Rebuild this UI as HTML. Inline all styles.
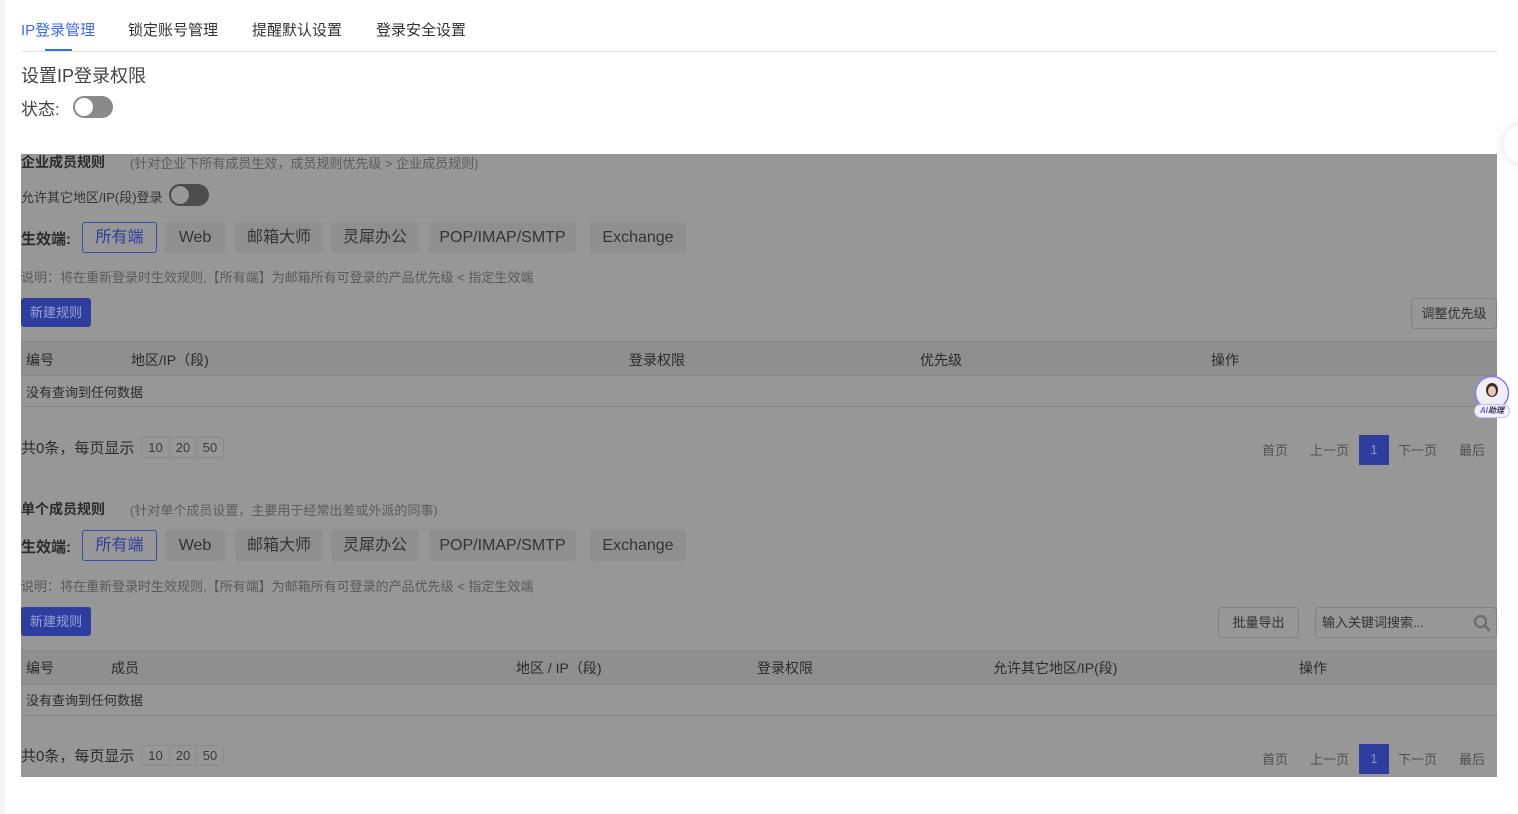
<!DOCTYPE html>
<html><head><meta charset="utf-8"><style>
*{margin:0;padding:0;box-sizing:border-box}
body{width:1518px;height:814px;background:#fff;font-family:"Liberation Sans","Noto Sans CJK SC",sans-serif;position:relative;overflow:hidden;color:#333}
.a{position:absolute;white-space:nowrap}
.tab{font-size:15px;top:19px;color:#333}
.ov{position:absolute;left:21px;top:154px;width:1476px;height:623px;background:#979797}
.t{position:absolute;white-space:nowrap;color:#2b2b2b}
.btn{position:absolute;height:31px;top:0;background:#8f8f8f;border-radius:3px;font-size:16px;color:#333;line-height:31px;text-align:center}
.sel{background:#979797;border:1px solid #3a4aa8;color:#2e3d9e;line-height:29px}
.blue{position:absolute;background:#2f3e9e;color:#9aa3d4;font-size:13px;border-radius:3px;text-align:center;line-height:29px;height:29px;width:70px;left:0}
.ob{position:absolute;border:1px solid #828282;border-radius:4px;font-size:13px;color:#333;text-align:center;line-height:29px;height:31px}
.th{position:absolute;left:0;width:1476px;height:35px;background:#8f8f8f;border-top:1px solid #868686;border-bottom:1px solid #868686}
.row{position:absolute;left:0;width:1476px;height:31px;border-bottom:1px solid #868686}
.ps{position:absolute;font-size:13px;color:#3a3a3a;border:1px solid #8a8a8a;border-radius:3px;height:21px;display:flex}
.ps span{display:block;width:27px;text-align:center;line-height:19px}
.ps span+span{border-left:1px solid #8a8a8a}
.pg{position:absolute;font-size:13px;color:#505050}
.pn{position:absolute;width:30px;height:30px;background:#2f3e9e;color:#8a93c8;font-size:13px;text-align:center;line-height:30px}
</style></head><body>
<div class="a" style="left:0;top:0;width:5px;height:814px;background:#f5f6f8"></div>
<div class="a tab" style="left:21px;color:#3d6af2">IP登录管理</div>
<div class="a" style="left:45px;top:49px;width:27px;height:2px;background:#3d6af2"></div>
<div class="a tab" style="left:128px">锁定账号管理</div>
<div class="a tab" style="left:252px">提醒默认设置</div>
<div class="a tab" style="left:376px">登录安全设置</div>
<div class="a" style="left:21px;top:51px;width:1476px;height:1px;background:#e4e4e4"></div>
<div class="a" style="left:21px;top:62px;font-size:18px;color:#444">设置IP登录权限</div>
<div class="a" style="left:21px;top:95px;font-size:17px;color:#444">状态:</div>
<div class="a" style="left:73px;top:96px;width:40px;height:22px;border-radius:11px;background:#8a8a8a"></div>
<div class="a" style="left:74px;top:97px;width:20px;height:20px;border-radius:10px;background:#fff;border:1px solid #888"></div>
<div class="a" style="left:1504px;top:124px;width:40px;height:40px;border-radius:20px;background:#fff;box-shadow:0 0 12px rgba(0,0,0,.12)"></div>

<div class="ov">
 <div class="t" style="left:0;top:-2px;font-size:14px;font-weight:bold">企业成员规则</div>
 <div class="t" style="left:109px;top:-1px;font-size:13px;color:#5c5c5c">(针对企业下所有成员生效，成员规则优先级 &gt; 企业成员规则)</div>
 <div class="t" style="left:0;top:33px;font-size:13px;color:#333">允许其它地区/IP(段)登录</div>
 <div class="t" style="left:148px;top:30px;width:40px;height:22px;border-radius:11px;background:#4d4d4d"></div>
 <div class="t" style="left:149px;top:31px;width:20px;height:20px;border-radius:10px;background:#979797;border:1px solid #444"></div>
 <div style="position:absolute;left:0;top:68px;width:900px;height:32px">
  <div class="t" style="left:0;top:6px;font-size:15px;font-weight:bold">生效端:</div>
  <div class="btn sel" style="left:61px;width:75px">所有端</div>
  <div class="btn" style="left:144px;width:60px">Web</div>
  <div class="btn" style="left:214px;width:88px">邮箱大师</div>
  <div class="btn" style="left:310px;width:88px">灵犀办公</div>
  <div class="btn" style="left:408px;width:147px">POP/IMAP/SMTP</div>
  <div class="btn" style="left:569px;width:96px">Exchange</div>
 </div>
 <div class="t" style="left:0;top:113px;font-size:13px;color:#5a5a5a">说明：将在重新登录时生效规则,【所有端】为邮箱所有可登录的产品优先级 &lt; 指定生效端</div>
 <div class="blue" style="top:144px">新建规则</div>
 <div class="ob" style="left:1390px;top:144px;width:86px">调整优先级</div>
 <div class="th" style="top:187px"></div>
 <div class="t" style="left:5px;top:196px;font-size:14px">编号</div>
 <div class="t" style="left:110px;top:196px;font-size:14px">地区/IP（段)</div>
 <div class="t" style="left:608px;top:196px;font-size:14px">登录权限</div>
 <div class="t" style="left:899px;top:196px;font-size:14px">优先级</div>
 <div class="t" style="left:1190px;top:196px;font-size:14px">操作</div>
 <div class="row" style="top:222px"></div>
 <div class="t" style="left:5px;top:228px;font-size:13px">没有查询到任何数据</div>
 <div class="t" style="left:0;top:283px;font-size:15px">共0条，每页显示</div>
 <div class="ps" style="left:120px;top:283px"><span>10</span><span>20</span><span>50</span></div>
 <div class="pg" style="left:1241px;top:286px">首页</div>
 <div class="pg" style="left:1289px;top:286px">上一页</div>
 <div class="pn" style="left:1338px;top:281px">1</div>
 <div class="pg" style="left:1377px;top:286px">下一页</div>
 <div class="pg" style="left:1438px;top:286px">最后</div>

 <div class="t" style="left:0;top:345px;font-size:14px;font-weight:bold">单个成员规则</div>
 <div class="t" style="left:109px;top:346px;font-size:13px;color:#5c5c5c">(针对单个成员设置，主要用于经常出差或外派的同事)</div>
 <div style="position:absolute;left:0;top:376px;width:900px;height:32px">
  <div class="t" style="left:0;top:6px;font-size:15px;font-weight:bold">生效端:</div>
  <div class="btn sel" style="left:61px;width:75px">所有端</div>
  <div class="btn" style="left:144px;width:60px">Web</div>
  <div class="btn" style="left:214px;width:88px">邮箱大师</div>
  <div class="btn" style="left:310px;width:88px">灵犀办公</div>
  <div class="btn" style="left:408px;width:147px">POP/IMAP/SMTP</div>
  <div class="btn" style="left:569px;width:96px">Exchange</div>
 </div>
 <div class="t" style="left:0;top:422px;font-size:13px;color:#5a5a5a">说明：将在重新登录时生效规则,【所有端】为邮箱所有可登录的产品优先级 &lt; 指定生效端</div>
 <div class="blue" style="top:453px">新建规则</div>
 <div class="ob" style="left:1197px;top:453px;width:81px">批量导出</div>
 <div class="ob" style="left:1294px;top:453px;width:182px;text-align:left;padding-left:6px">输入关键词搜索...</div>
 <svg style="position:absolute;left:1452px;top:460px" width="18" height="18" viewBox="0 0 18 18"><circle cx="7.5" cy="7.5" r="5.5" fill="none" stroke="#6c6c6c" stroke-width="2.2"/><path d="M11.5 11.5L16 16" stroke="#6c6c6c" stroke-width="2.6" stroke-linecap="round"/></svg>
 <div class="th" style="top:496px"></div>
 <div class="t" style="left:5px;top:504px;font-size:14px">编号</div>
 <div class="t" style="left:90px;top:504px;font-size:14px">成员</div>
 <div class="t" style="left:495px;top:504px;font-size:14px">地区 / IP（段)</div>
 <div class="t" style="left:736px;top:504px;font-size:14px">登录权限</div>
 <div class="t" style="left:972px;top:504px;font-size:14px">允许其它地区/IP(段)</div>
 <div class="t" style="left:1278px;top:504px;font-size:14px">操作</div>
 <div class="row" style="top:531px"></div>
 <div class="t" style="left:5px;top:536px;font-size:13px">没有查询到任何数据</div>
 <div class="t" style="left:0;top:591px;font-size:15px">共0条，每页显示</div>
 <div class="ps" style="left:120px;top:591px"><span>10</span><span>20</span><span>50</span></div>
 <div class="pg" style="left:1241px;top:595px">首页</div>
 <div class="pg" style="left:1289px;top:595px">上一页</div>
 <div class="pn" style="left:1338px;top:590px">1</div>
 <div class="pg" style="left:1377px;top:595px">下一页</div>
 <div class="pg" style="left:1438px;top:595px">最后</div>
</div>

<svg class="a" style="left:1474px;top:375px" width="36" height="36" viewBox="0 0 36 36"><circle cx="18" cy="18" r="16.5" fill="#f0eef8" stroke="#8a7cf0" stroke-width="1.5"/><ellipse cx="18" cy="15" rx="6" ry="7" fill="#3a2a28"/><ellipse cx="18" cy="16" rx="4" ry="5" fill="#e8c8b8"/><path d="M9 32c2-6 16-6 18 0" fill="#e6e6f4"/></svg>
<div class="a" style="left:1474px;top:404px;width:36px;height:14px;border-radius:7px;background:#f2efff;border:1px solid #c8bff5;font-size:8px;font-weight:bold;font-style:italic;color:#3a3560;text-align:center;line-height:12px"><span style="color:#6a5ef0">AI</span>助理</div>
</body></html>
